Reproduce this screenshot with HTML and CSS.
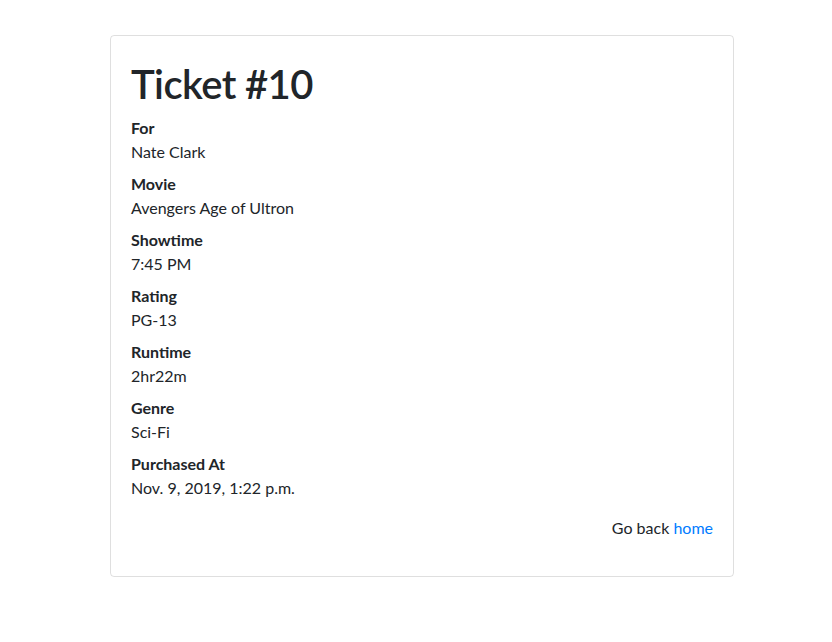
FILE: index.html
```html
<!DOCTYPE html>
<html>
<head>
<meta charset="utf-8">
<link rel="stylesheet" href="styles.css">
</head>
<body>
<main class="page">
  <section class="card">
    <h1 class="title">Ticket #10</h1>
    <dl class="details">
      <dt>For</dt>
      <dd>Nate Clark</dd>
      <dt>Movie</dt>
      <dd>Avengers Age of Ultron</dd>
      <dt>Showtime</dt>
      <dd>7:45 PM</dd>
      <dt>Rating</dt>
      <dd>PG-13</dd>
      <dt>Runtime</dt>
      <dd>2hr22m</dd>
      <dt>Genre</dt>
      <dd>Sci-Fi</dd>
      <dt>Purchased At</dt>
      <dd>Nov. 9, 2019, 1:22 p.m.</dd>
    </dl>
    <p class="back">Go back <a href="#">home</a></p>
  </section>
</main>
</body>
</html>
```

FILE: styles.css
```css
html, body {
  margin: 0;
  padding: 0;
  background: #fff;
}
body {
  font-family: "Lato", "Noto Sans", sans-serif;
  font-size: 16px;
  line-height: 1.5;
  color: #212529;
}
.page {
  padding-top: 35px;
  padding-left: 110px;
}
.card {
  width: 624px;
  box-sizing: border-box;
  border: 1px solid rgba(0, 0, 0, 0.125);
  border-radius: 4px;
  padding: 24px 20px 20px;
}
.title {
  margin: 0 0 8px;
  font-size: 40px;
  font-weight: 600;
  line-height: 1.2;
  letter-spacing: -0.6px;
}
.details {
  margin: 0 0 16px;
}
.details dt {
  font-weight: 700;
}
.details dd {
  margin: 0 0 8px;
}
.back {
  margin: 0 0 16px;
  text-align: right;
}
.back a {
  color: #007bff;
  text-decoration: none;
}
```
